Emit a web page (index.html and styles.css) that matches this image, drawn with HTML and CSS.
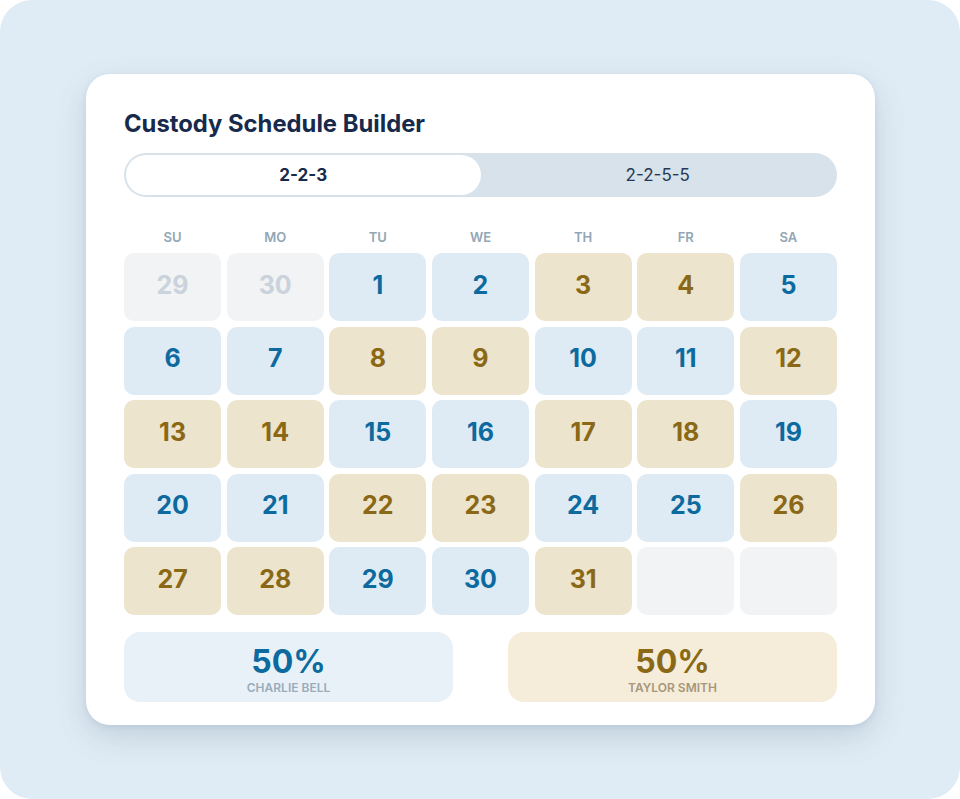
FILE: index.html
```html
<!DOCTYPE html>
<html lang="en">
<head>
<meta charset="utf-8">
<title>Custody Schedule Builder</title>
<link rel="stylesheet" href="styles.css">
</head>
<body>
<div class="stage">
  <section class="card">
    <h1 class="title">Custody Schedule Builder</h1>

    <div class="toggle">
      <button class="toggle-opt is-active">2-2-3</button>
      <button class="toggle-opt">2-2-5-5</button>
    </div>

    <div class="weekdays">
      <span>SU</span><span>MO</span><span>TU</span><span>WE</span><span>TH</span><span>FR</span><span>SA</span>
    </div>

    <div class="calendar">
      <div class="day out">29</div>
      <div class="day out">30</div>
      <div class="day a">1</div>
      <div class="day a">2</div>
      <div class="day b">3</div>
      <div class="day b">4</div>
      <div class="day a">5</div>

      <div class="day a">6</div>
      <div class="day a">7</div>
      <div class="day b">8</div>
      <div class="day b">9</div>
      <div class="day a">10</div>
      <div class="day a">11</div>
      <div class="day b">12</div>

      <div class="day b">13</div>
      <div class="day b">14</div>
      <div class="day a">15</div>
      <div class="day a">16</div>
      <div class="day b">17</div>
      <div class="day b">18</div>
      <div class="day a">19</div>

      <div class="day a">20</div>
      <div class="day a">21</div>
      <div class="day b">22</div>
      <div class="day b">23</div>
      <div class="day a">24</div>
      <div class="day a">25</div>
      <div class="day b">26</div>

      <div class="day b">27</div>
      <div class="day b">28</div>
      <div class="day a">29</div>
      <div class="day a">30</div>
      <div class="day b">31</div>
      <div class="day out"></div>
      <div class="day out"></div>
    </div>

    <div class="summary">
      <div class="share share-a">
        <div class="share-pct">50%</div>
        <div class="share-name">CHARLIE BELL</div>
      </div>
      <div class="share share-b">
        <div class="share-pct">50%</div>
        <div class="share-name">TAYLOR SMITH</div>
      </div>
    </div>
  </section>
</div>
</body>
</html>
```
FILE: styles.css
```css
* {
  box-sizing: border-box;
}

html,
body {
  margin: 0;
  padding: 0;
  background: #ffffff;
}

body {
  font-family: "Inter", "Noto Sans", "Liberation Sans", sans-serif;
}

.stage {
  width: 960px;
  height: 799px;
  background: #e0ecf5;
  border-radius: 32px;
  padding-top: 74px;
  padding-left: 86px;
}

.card {
  width: 789px;
  height: 651px;
  background: #ffffff;
  border-radius: 24px;
  box-shadow: 0 12px 32px rgba(40, 70, 100, 0.16), 0 2px 6px rgba(40, 70, 100, 0.08);
  padding: 36px 38px 22px;
}

.title {
  margin: 0 0 15px;
  font-size: 23.8px;
  line-height: 28px;
  font-weight: 700;
  color: #172a4b;
}

.toggle {
  display: grid;
  grid-template-columns: 1fr 1fr;
  height: 44px;
  padding: 2px;
  border-radius: 22px;
  background: #d7e2ea;
}

.toggle-opt {
  border: 0;
  background: transparent;
  border-radius: 20px;
  font-family: inherit;
  font-size: 17px;
  color: #263955;
  padding: 0;
}

.toggle-opt.is-active {
  background: #ffffff;
  font-weight: 700;
  color: #172a4b;
}

.weekdays {
  display: grid;
  grid-template-columns: repeat(7, 1fr);
  column-gap: 5.5px;
  margin-top: 32px;
  margin-bottom: 8px;
  font-size: 13px;
  line-height: 16px;
  font-weight: 600;
  color: #93a6b5;
  text-align: center;
}

.calendar {
  display: grid;
  grid-template-columns: repeat(7, 1fr);
  grid-auto-rows: 68px;
  gap: 5.5px;
}

.day {
  border-radius: 10px;
  display: flex;
  align-items: center;
  justify-content: center;
  padding-bottom: 5px;
  font-size: 25px;
  font-weight: 700;
}

.day.a {
  background: #deebf5;
  color: #0d6a9f;
}

.day.b {
  background: #ece4cc;
  color: #8a6816;
}

.day.out {
  background: #f1f3f5;
  color: #cad2db;
}

.summary {
  display: grid;
  grid-template-columns: 329px 329px;
  justify-content: space-between;
  margin-top: 17px;
}

.share {
  height: 70px;
  border-radius: 16px;
  display: flex;
  flex-direction: column;
  align-items: center;
  padding-top: 12px;
}

.share-pct {
  font-size: 32px;
  line-height: 36px;
  font-weight: 700;
}

.share-name {
  font-size: 12px;
  line-height: 14px;
  font-weight: 600;
  margin-top: 1px;
}

.share-a {
  background: #e8f1f8;
}

.share-a .share-pct {
  color: #0d6a9f;
}

.share-a .share-name {
  color: #9aabb9;
}

.share-b {
  background: #f5ecda;
}

.share-b .share-pct {
  color: #8a6816;
}

.share-b .share-name {
  color: #a6977a;
}
```
